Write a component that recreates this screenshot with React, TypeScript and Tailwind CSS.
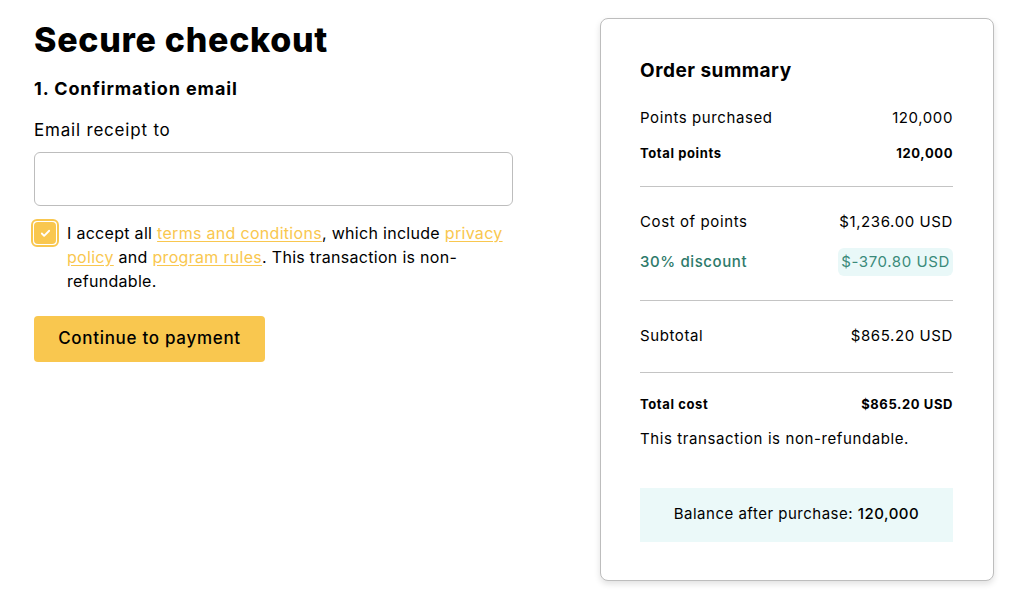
import { Check } from 'lucide-react';

function Row({ label, value, bold }: { label: string; value: string; bold?: boolean }) {
  return (
    <div
      className={`flex items-center justify-between ${
        bold ? 'text-[13px] font-bold tracking-[0.6px]' : 'text-[15px] tracking-[0.6px]'
      }`}
    >
      <span>{label}</span>
      <span>{value}</span>
    </div>
  );
}

export default function App() {
  return (
    <div className="min-h-[591px] bg-white text-black font-['Inter',sans-serif]">
      <div className="flex items-start justify-between pl-[34px] pr-[30px] pt-[18px]">
        {/* Left column */}
        <div className="w-[479px]">
          <h1 className="mt-[2px] text-[34px] font-extrabold leading-[40px] tracking-[0.7px]">Secure checkout</h1>
          <h2 className="mt-[17px] text-[18px] font-bold leading-[24px] tracking-[0.9px]">1. Confirmation email</h2>
          <label className="mt-[17px] block text-[17px] leading-[24px] tracking-[0.8px]">Email receipt to</label>
          <input
            type="email"
            className="mt-[10px] block h-[54px] w-full rounded-[6px] border border-[#bdbdbd] px-3 outline-none"
          />
          <div className="mt-[13px] flex gap-[8px]">
            <div className="-ml-[3px] flex h-[28px] w-[28px] shrink-0 items-center justify-center rounded-[6px] border-2 border-[#f9c74f] p-[1px]">
              <div className="flex h-full w-full items-center justify-center rounded-[4px] bg-[#f9c74f]">
                <Check className="h-[11px] w-[11px] text-white" strokeWidth={4} />
              </div>
            </div>
            <p className="mt-[2px] text-[16px] leading-[24px] tracking-[0.3px]">
              I accept all{' '}
              <a className="text-[#f9c74f] underline underline-offset-2">terms and conditions</a>, which include{' '}
              <a className="text-[#f9c74f] underline underline-offset-2">privacy policy</a> and{' '}
              <a className="text-[#f9c74f] underline underline-offset-2">program rules</a>. This transaction is non-refundable.
            </p>
          </div>
          <button className="mt-[23px] h-[46px] w-[231px] rounded-[4px] bg-[#f9c74f] text-[17px] font-medium tracking-[0.7px]">
            Continue to payment
          </button>
        </div>

        {/* Order summary card */}
        <div className="h-[563px] w-[394px] rounded-[8px] border border-[#bdbdbd] bg-white pl-[39px] pr-[40px] pt-[40px] shadow-[0_3px_6px_rgba(0,0,0,0.12)]">
          <h3 className="text-[19px] font-bold leading-[24px] tracking-[0.5px]">Order summary</h3>
          <div className="mt-[24px]">
            <Row label="Points purchased" value="120,000" />
          </div>
          <div className="mt-[14px]">
            <Row label="Total points" value="120,000" bold />
          </div>
          <div className="mt-[23px] border-t border-[#c4c4c4]" />
          <div className="mt-[24px]">
            <Row label="Cost of points" value="$1,236.00 USD" />
          </div>
          <div className="mt-[14px] flex items-center justify-between text-[15px] tracking-[0.6px]">
            <span className="font-medium text-[#2e7a6a]">30% discount</span>
            <span className="rounded-[6px] bg-[#e9f8f8] px-[3px] py-[3px] text-[#3a8a7a]">$-370.80 USD</span>
          </div>
          <div className="mt-[24px] border-t border-[#c4c4c4]" />
          <div className="mt-[24px]">
            <Row label="Subtotal" value="$865.20 USD" />
          </div>
          <div className="mt-[24px] border-t border-[#c4c4c4]" />
          <div className="mt-[22px]">
            <Row label="Total cost" value="$865.20 USD" bold />
          </div>
          <p className="mt-[14px] text-[15px] tracking-[0.6px]">This transaction is non-refundable.</p>
          <div className="mt-[37px] flex h-[54px] items-center justify-center bg-[#ebf9f9] text-[15px] tracking-[0.5px]">
            Balance after purchase:&nbsp;<span className="font-medium">120,000</span>
          </div>
        </div>
      </div>
    </div>
  );
}
